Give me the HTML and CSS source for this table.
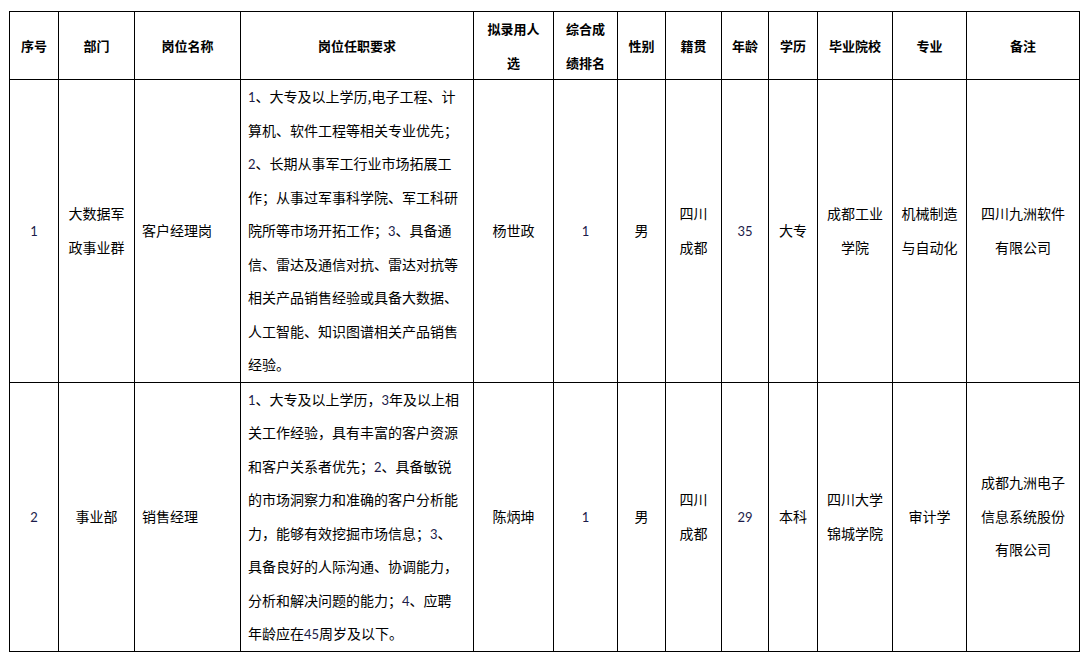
FILE: index.html
```html
<!DOCTYPE html>
<html lang="zh-CN">
<head>
<meta charset="utf-8">
<title>拟录用人选公示</title>
<link rel="stylesheet" href="styles.css">
</head>
<body>
<table class="grid">
  <colgroup>
    <col class="c-no"><col class="c-dept"><col class="c-pos"><col class="c-req">
    <col class="c-name"><col class="c-rank"><col class="c-sex"><col class="c-home">
    <col class="c-age"><col class="c-edu"><col class="c-school"><col class="c-major"><col class="c-note">
  </colgroup>
  <thead>
    <tr>
      <th>序号</th>
      <th>部门</th>
      <th>岗位名称</th>
      <th>岗位任职要求</th>
      <th>拟录用人<br>选</th>
      <th>综合成<br>绩排名</th>
      <th>性别</th>
      <th>籍贯</th>
      <th>年龄</th>
      <th>学历</th>
      <th>毕业院校</th>
      <th>专业</th>
      <th>备注</th>
    </tr>
  </thead>
  <tbody>
    <tr>
      <td><span class="num">1</span></td>
      <td>大数据军<br>政事业群</td>
      <td class="left">客户经理岗</td>
      <td class="req"><span class="num">1</span>、大专及以上学历,电子工程、计<br>算机、软件工程等相关专业优先；<br><span class="num">2</span>、长期从事军工行业市场拓展工<br>作；从事过军事科学院、军工科研<br>院所等市场开拓工作；<span class="num">3</span>、具备通<br>信、雷达及通信对抗、雷达对抗等<br>相关产品销售经验或具备大数据、<br>人工智能、知识图谱相关产品销售<br>经验。</td>
      <td>杨世政</td>
      <td><span class="num">1</span></td>
      <td>男</td>
      <td>四川<br>成都</td>
      <td><span class="num">35</span></td>
      <td>大专</td>
      <td>成都工业<br>学院</td>
      <td>机械制造<br>与自动化</td>
      <td>四川九洲软件<br>有限公司</td>
    </tr>
    <tr>
      <td><span class="num">2</span></td>
      <td>事业部</td>
      <td class="left">销售经理</td>
      <td class="req"><span class="num">1</span>、大专及以上学历，<span class="num">3</span>年及以上相<br>关工作经验，具有丰富的客户资源<br>和客户关系者优先；<span class="num">2</span>、具备敏锐<br>的市场洞察力和准确的客户分析能<br>力，能够有效挖掘市场信息；<span class="num">3</span>、<br>具备良好的人际沟通、协调能力，<br>分析和解决问题的能力；<span class="num">4</span>、应聘<br>年龄应在<span class="num">45</span>周岁及以下。</td>
      <td>陈炳坤</td>
      <td><span class="num">1</span></td>
      <td>男</td>
      <td>四川<br>成都</td>
      <td><span class="num">29</span></td>
      <td>本科</td>
      <td>四川大学<br>锦城学院</td>
      <td>审计学</td>
      <td>成都九洲电子<br>信息系统股份<br>有限公司</td>
    </tr>
  </tbody>
</table>
</body>
</html>
```

FILE: styles.css
```css
html, body {
  margin: 0;
  padding: 0;
  background: #ffffff;
}

body {
  font-family: "Noto Sans CJK SC", "Noto Sans", sans-serif;
  color: #000000;
}

.grid {
  margin: 11px 0 0 9px;
  width: 1070px;
  table-layout: fixed;
  border-collapse: collapse;
  border: 1px solid #000;
}

.c-no { width: 49px; }
.c-dept { width: 76px; }
.c-pos { width: 106px; }
.c-req { width: 233px; }
.c-name { width: 80px; }
.c-rank { width: 64px; }
.c-sex { width: 48px; }
.c-home { width: 56px; }
.c-age { width: 47px; }
.c-edu { width: 49px; }
.c-school { width: 75px; }
.c-major { width: 74px; }
.c-note { width: 113px; }

.grid th,
.grid td {
  border: 1px solid #000;
  padding: 0 4px;
  text-align: center;
  vertical-align: middle;
  line-height: 33.5px;
  white-space: nowrap;
}

.grid th {
  font-size: 13px;
  font-weight: 700;
}

.grid td {
  font-size: 14px;
  font-weight: 400;
}

.grid td.left {
  text-align: left;
  padding-left: 7px;
}

.grid td.req {
  text-align: left;
  padding: 0 6px 0 7px;
}

.num {
  font-family: "Lato", "Liberation Sans", sans-serif;
  font-size: 13px;
  line-height: 0;
  color: #1c1c4a;
}
```
